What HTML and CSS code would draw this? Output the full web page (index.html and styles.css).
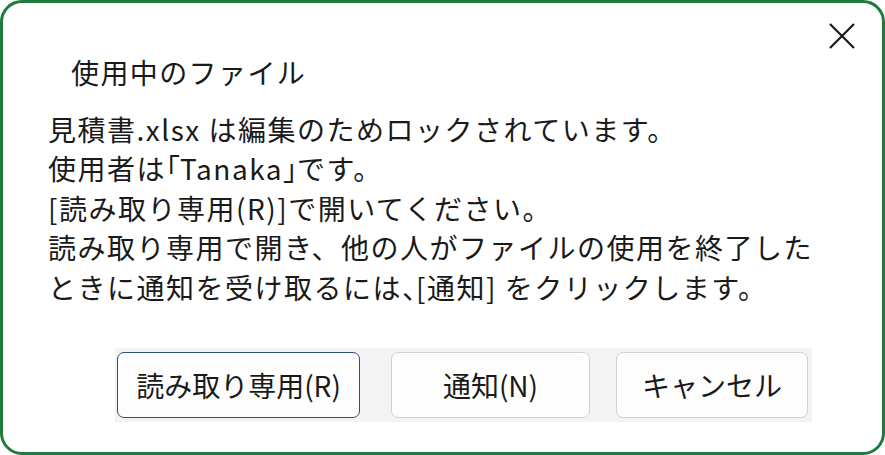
FILE: index.html
```html
<!DOCTYPE html>
<html lang="ja">
<head>
  <meta charset="UTF-8">
  <meta name="viewport" content="width=device-width, initial-scale=1.0">
  <title>使用中のファイル</title>
  <link rel="stylesheet" href="styles.css">
</head>
<body>
  <div class="dialog">
    <div class="title-bar">
      <div class="title">使用中のファイル</div>
      <button class="close" aria-label="閉じる">
        <svg width="26" height="26" viewBox="0 0 26 26">
          <path d="M1 1 L25 25 M25 1 L1 25" stroke="#1a1a1a" stroke-width="2.2" fill="none"/>
        </svg>
      </button>
    </div>
    <div class="message">
      <p>見積書.xlsx は編集のためロックされています。</p>
      <p>使用者は<span class="half">「</span>Tanaka<span class="half">」</span>です。</p>
      <p>[読み取り専用(R)]で開いてください。</p>
      <p>読み取り専用で開き、他の人がファイルの使用を終了した</p>
      <p>ときに通知を受け取るには<span class="half">、</span>[通知] をクリックします。</p>
    </div>
    <div class="actions">
      <button class="btn btn-default">読み取り専用(R)</button>
      <button class="btn btn-notify">通知(N)</button>
      <button class="btn btn-cancel">キャンセル</button>
    </div>
  </div>
</body>
</html>
```

FILE: styles.css
```css
html, body {
  margin: 0;
  padding: 0;
  background: #fff;
}
.dialog {
  width: 885px;
  height: 455px;
  box-sizing: border-box;
  border: 3px solid #1e7b3c;
  border-radius: 22px;
  padding: 0 0 0 45px;
  color: #1a1a1a;
  font-family: "Noto Sans CJK JP", "Noto Sans", sans-serif;
  font-size: 28px;
  line-height: 39.5px;
}
.title-bar {
  display: flex;
  justify-content: space-between;
  align-items: flex-start;
  padding-top: 12px;
}
.title {
  margin-top: 38px;
  padding-left: 23px;
  letter-spacing: 1.4px;
}
.close {
  width: 41px;
  height: 41px;
  margin-right: 20px;
  padding: 0;
  border: none;
  background: transparent;
  display: flex;
  align-items: center;
  justify-content: center;
}
/* 本文：行間 39.5px */
.message {
  margin-top: 17px;
  letter-spacing: 1.5px;
}
.message p {
  margin: 0;
  white-space: nowrap;
}
/* 括弧・読点を半角幅に詰める */
.half {
  font-feature-settings: "halt";
  letter-spacing: 0;
}
.actions {
  display: flex;
  width: fit-content;
  margin: 41px 0 0 67px;
  padding: 4px 4px 4px 2px;
  background: #f3f3f3;
}
.btn {
  height: 66px;
  box-sizing: border-box;
  border: 1px solid #d2d2d2;
  border-radius: 7px;
  background: #fdfdfd;
  color: #1a1a1a;
  font-family: inherit;
  font-size: 28px;
  padding: 0;
}
.btn-default {
  width: 243px;
  border: 1.5px solid #2e4f74;
}
.btn-notify {
  width: 199px;
  margin-left: 31px;
}
.btn-cancel {
  width: 192px;
  margin-left: 26px;
}
```
